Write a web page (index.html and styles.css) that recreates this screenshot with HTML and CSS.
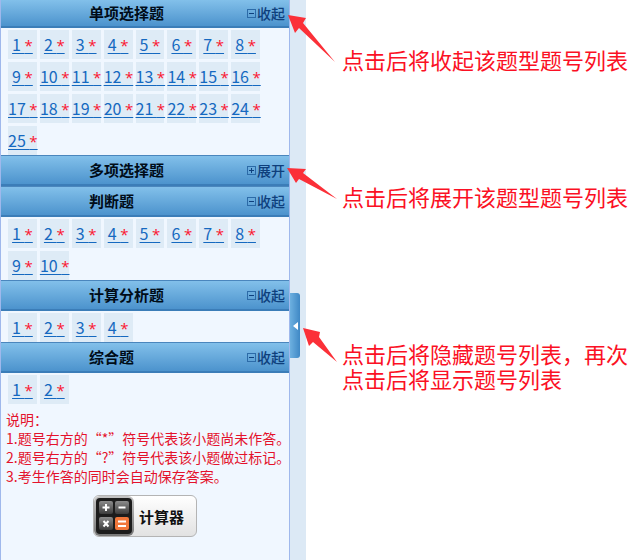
FILE: index.html
```html
<!DOCTYPE html>
<html lang="zh-CN">
<head>
    <meta charset="UTF-8">
    <meta name="viewport" content="width=device-width, initial-scale=1.0">
    <title>题号列表</title>
    <link rel="stylesheet" href="styles.css">
</head>
<body>
    <div class="page">
        <div class="panel">
            <div class="type-header first">
                <h2>单项选择题</h2>
                <button type="button" class="toggle"><span class="box minus"></span>收起</button>
            </div>
            <div class="number-list">
                <a href="#">1 <i>*</i></a>
                <a href="#">2 <i>*</i></a>
                <a href="#">3 <i>*</i></a>
                <a href="#">4 <i>*</i></a>
                <a href="#">5 <i>*</i></a>
                <a href="#">6 <i>*</i></a>
                <a href="#">7 <i>*</i></a>
                <a href="#">8 <i>*</i></a>
                <a href="#">9 <i>*</i></a>
                <a href="#">10 <i>*</i></a>
                <a href="#">11 <i>*</i></a>
                <a href="#">12 <i>*</i></a>
                <a href="#">13 <i>*</i></a>
                <a href="#">14 <i>*</i></a>
                <a href="#">15 <i>*</i></a>
                <a href="#">16 <i>*</i></a>
                <a href="#">17 <i>*</i></a>
                <a href="#">18 <i>*</i></a>
                <a href="#">19 <i>*</i></a>
                <a href="#">20 <i>*</i></a>
                <a href="#">21 <i>*</i></a>
                <a href="#">22 <i>*</i></a>
                <a href="#">23 <i>*</i></a>
                <a href="#">24 <i>*</i></a>
                <a href="#">25 <i>*</i></a>
            </div>

            <div class="type-header">
                <h2>多项选择题</h2>
                <button type="button" class="toggle"><span class="box plus"></span>展开</button>
            </div>

            <div class="type-header">
                <h2>判断题</h2>
                <button type="button" class="toggle"><span class="box minus"></span>收起</button>
            </div>
            <div class="number-list">
                <a href="#">1 <i>*</i></a>
                <a href="#">2 <i>*</i></a>
                <a href="#">3 <i>*</i></a>
                <a href="#">4 <i>*</i></a>
                <a href="#">5 <i>*</i></a>
                <a href="#">6 <i>*</i></a>
                <a href="#">7 <i>*</i></a>
                <a href="#">8 <i>*</i></a>
                <a href="#">9 <i>*</i></a>
                <a href="#">10 <i>*</i></a>
            </div>

            <div class="type-header">
                <h2>计算分析题</h2>
                <button type="button" class="toggle"><span class="box minus"></span>收起</button>
            </div>
            <div class="number-list">
                <a href="#">1 <i>*</i></a>
                <a href="#">2 <i>*</i></a>
                <a href="#">3 <i>*</i></a>
                <a href="#">4 <i>*</i></a>
            </div>

            <div class="type-header">
                <h2>综合题</h2>
                <button type="button" class="toggle"><span class="box minus"></span>收起</button>
            </div>
            <div class="number-list">
                <a href="#">1 <i>*</i></a>
                <a href="#">2 <i>*</i></a>
            </div>

            <div class="explain">
                <p>说明：</p>
                <p>1.题号右方的“*”符号代表该小题尚未作答。</p>
                <p>2.题号右方的“?”符号代表该小题做过标记。</p>
                <p>3.考生作答的同时会自动保存答案。</p>
            </div>

            <button type="button" class="calculator">
                <svg width="40" height="40" viewBox="0 0 40 40" aria-hidden="true">
                    <defs>
                        <linearGradient id="rim" x1="0" y1="0" x2="0" y2="1">
                            <stop offset="0" stop-color="#c4c4c4"/>
                            <stop offset="1" stop-color="#777"/>
                        </linearGradient>
                        <linearGradient id="key" x1="0" y1="0" x2="0" y2="1">
                            <stop offset="0" stop-color="#8c8c8c"/>
                            <stop offset="1" stop-color="#3c3c3c"/>
                        </linearGradient>
                    </defs>
                    <rect x="0" y="0" width="40" height="40" rx="6" fill="url(#rim)"/>
                    <rect x="2" y="2" width="36" height="36" rx="4" fill="#1c1c1c"/>
                    <rect x="5" y="5" width="14" height="13" rx="2" fill="url(#key)"/>
                    <rect x="21" y="5" width="14" height="13" rx="2" fill="url(#key)"/>
                    <rect x="5" y="21" width="14" height="13" rx="2" fill="url(#key)"/>
                    <rect x="21" y="21" width="14" height="13" rx="2" fill="#f0763a"/>
                    <path d="M12 8v7M8.500 11.500h7M24.500 11.500h7M9.500 25l5 5.500M14.500 25l-5 5.500M24 25.500h8M24 30h8" stroke="#fff" stroke-width="2" fill="none"/>
                </svg>
                <span>计算器</span>
            </button>
        </div>

        <div class="divider">
            <button type="button" class="handle" aria-label="隐藏题号列表">
                <svg width="5" height="8" viewBox="0 0 5 8"><path d="M5 0v8L0 4z" fill="#fff"/></svg>
            </button>
        </div>

        <div class="tips">
            <p class="tip tip-collapse">
                <svg class="arrow" width="60" height="60" viewBox="0 0 60 60"><path d="M3 1L21 4L18 9L50 48L14 14L10 19z"/></svg>
                点击后将收起该题型题号列表
            </p>
            <p class="tip tip-expand">
                <svg class="arrow" width="60" height="60" viewBox="0 0 60 60"><path d="M2 17L21 18L18 22L52 48L14 28L11 32z"/></svg>
                点击后将展开该题型题号列表
            </p>
            <p class="tip tip-hide">
                <svg class="arrow" width="60" height="60" viewBox="0 0 60 60"><path d="M18 7L35 11L34 16L52 41L28 21L24 25z"/></svg>
                点击后将隐藏题号列表，再次<br>点击后将显示题号列表
            </p>
        </div>
    </div>
</body>
</html>
```
FILE: styles.css
```css
* {
    box-sizing: border-box;
}

body {
    margin: 0;
    background-color: #fff;
    font-family: "Noto Sans CJK SC", sans-serif;
}

h2,
p {
    margin: 0;
}

button {
    padding: 0;
    border: none;
    font-family: inherit;
    cursor: pointer;
}

.page {
    display: flex;
    min-height: 100vh;
}

/* 左侧题号面板 */
.panel {
    flex: 0 0 290px;
    min-width: 0;
    background-color: #f0f7ff;
    border-left: 1px solid #9fb8ec;
    border-right: 1px solid #9fb8ec;
}

.type-header {
    display: flex;
    justify-content: space-between;
    align-items: center;
    height: 31px;
    padding: 0 4px 0 88px;
    background: linear-gradient(#82c0ea, #4c93cd);
    border-top: 1px solid #4a86bd;
    border-bottom: 2px solid #3b7db8;
}

.type-header.first {
    height: 28px;
    border-top: none;
}

.type-header h2 {
    font-size: 15px;
    line-height: 20px;
    color: #000c18;
}

.toggle {
    display: flex;
    align-items: center;
    gap: 1px;
    background: none;
    color: #0e3f7c;
    font-size: 14px;
    font-weight: 500;
    line-height: 20px;
}

.box {
    width: 9px;
    height: 9px;
    border: 1px solid #2c6ba8;
    background: linear-gradient(#0e3f7c, #0e3f7c) center / 5px 1px no-repeat;
}

.box.plus {
    background: linear-gradient(#0e3f7c, #0e3f7c) center / 5px 1px no-repeat,
                linear-gradient(#0e3f7c, #0e3f7c) center / 1px 5px no-repeat;
}

.number-list {
    display: grid;
    grid-template-columns: repeat(8, minmax(0, 1fr));
    gap: 3px;
    padding: 2px 29px 0 7px;
}

.number-list a {
    height: 29px;
    background-color: #deebf6;
    color: #1569c0;
    font-size: 16px;
    line-height: 29px;
    text-align: center;
    text-underline-offset: 2px;
    white-space: nowrap;
}

.number-list i {
    color: #fb1530;
    font-family: "Open Sans", sans-serif;
    font-size: 15px;
    font-style: normal;
}

.explain {
    padding: 6px 0 0 5px;
    color: #e4122c;
    font-size: 14px;
    line-height: 19px;
    white-space: nowrap;
}

.calculator {
    display: flex;
    align-items: center;
    gap: 5px;
    margin: 9px auto 0 92px;
    padding-right: 12px;
    border: 1px solid #b4b4b4;
    border-radius: 6px;
    background: linear-gradient(#fff, #e2e2e2);
    color: #111;
    font-size: 15px;
    font-weight: bold;
}

/* 隐藏/显示面板的分隔条 */
.divider {
    flex: 0 0 16px;
    background-color: #dce9f5;
}

.handle {
    display: flex;
    justify-content: center;
    align-items: center;
    width: 10px;
    height: 65px;
    margin-top: 293px;
    border-radius: 0 3px 3px 0;
    background: linear-gradient(to right, #6db0e0, #3f88c5);
}

.tips {
    flex: 1;
    min-width: 0;
    padding: 49px 0 0 36px;
    color: #fb1024;
    font-family: "Liberation Sans", "Noto Sans CJK SC", sans-serif;
    font-size: 22px;
    line-height: 25px;
    white-space: nowrap;
}

.tip {
    position: relative;
}

.tip-expand {
    margin-top: 112px;
}

.tip-hide {
    margin-top: 132px;
}

.arrow {
    position: absolute;
    right: 100%;
    top: 0;
    margin-right: -3px;
    fill: #fb3038;
}

.tip-collapse .arrow {
    top: -35px;
}

.tip-expand .arrow {
    top: -35px;
}

.tip-hide .arrow {
    top: -22px;
}
```
